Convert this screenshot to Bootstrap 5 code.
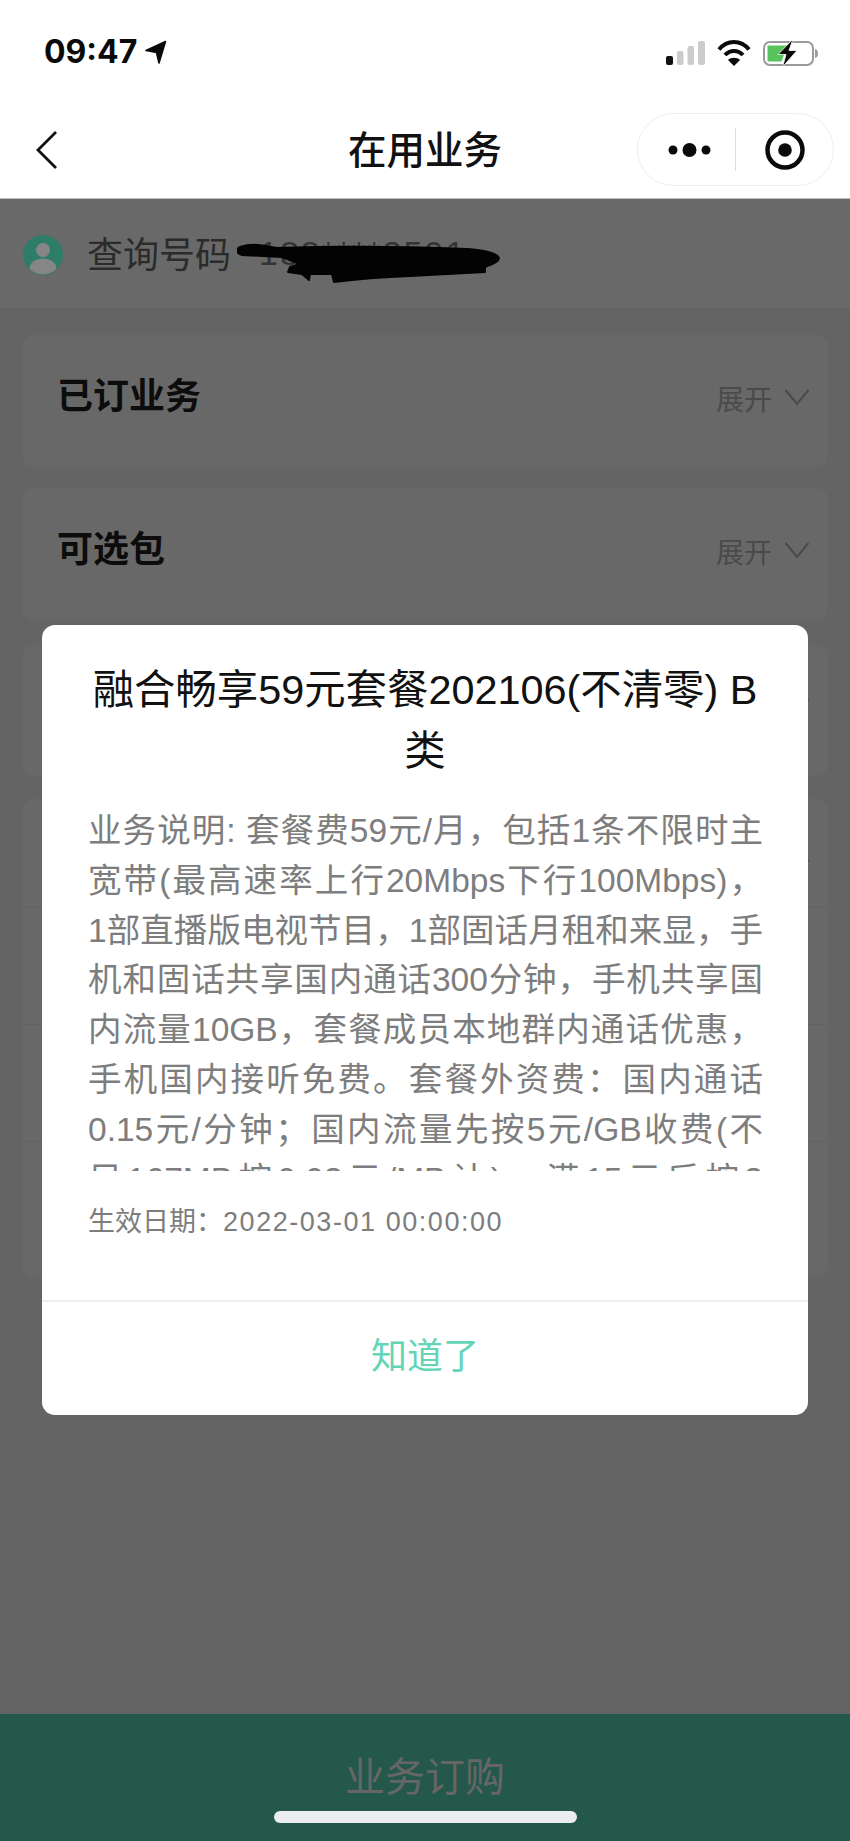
<!DOCTYPE html>
<html lang="zh"><head><meta charset="utf-8">
<link rel="stylesheet" href="https://cdn.jsdelivr.net/npm/bootstrap@5.3.0/dist/css/bootstrap.min.css">
<style>
html,body{margin:0;height:1841px;overflow:hidden;}
body{font-family:"Liberation Sans","Noto Sans CJK SC",sans-serif;background:#646464;}
.shell{width:850px;height:1841px;position:relative;}
.topbar{height:199px;background:#fff;border-bottom:1px solid #bdbdbd;}
.statusrow{height:100px;padding:39px 32px 0 44px;}
.clock{font:700 32px/26px "Inter","Liberation Sans",sans-serif;color:#0a0a0a;}
.navrow{height:99px;position:relative;padding:0 16px 0 36px;}
.navtitle{position:absolute;left:0;right:0;top:25px;text-align:center;font-size:38.5px;line-height:52px;font-weight:500;color:#111;}
.capsule{width:197px;height:73px;border:1px solid #eee;border-radius:37px;margin-top:13px;}
.capsule-left{width:97px;padding-left:6px;}
.capsule-sep{width:1px;height:43px;background:#ddd;}
.idrow{height:110px;padding:3px 0 0 23px;background:#696969;border-bottom:1px solid #626262;color:#2b2b2b;font-size:36px;position:relative;}
.idtxt{margin-left:24px;margin-top:2px;}
.scribble{position:absolute;left:237px;top:44px;}
.numtxt{color:#333;letter-spacing:2px;font-size:34px;margin-left:28px;margin-top:-3px;}
.cards{padding:26px 22px 0;}
.rowcard{background:#686868;border-radius:12px;height:132px;margin-bottom:21px;padding:0 18px 0 36px;}
.rowcard.third{height:131px;margin-bottom:23px;margin-top:25px;}
.rowcard.multi{height:478px;padding:0;margin:0;}
.subrow{padding:0 18px 0 36px;border-bottom:1px solid #616161;height:109px;}
.subrow+.subrow{height:117px;}
.subrow:last-child{height:135px;border-bottom:0;}
.rowtitle{font-size:36px;font-weight:700;color:#0c0c0c;margin-top:-9px;margin-left:-1px;}
.rowmore{font-size:28px;color:#4a4a4a;line-height:1;gap:12px;}
.chev{margin-top:-9px;}
.dialog{position:absolute;left:42px;top:625px;width:766px;height:790px;background:#fff;border-radius:13px;overflow:hidden;}
.dlgtitle{font-size:41.400px;line-height:61px;text-align:center;color:#111;padding:35px 40px 0;height:181px;}
.dlgbody{font-size:33.500px;line-height:49.800px;color:#7d7d7d;margin:0 45px 0 46px;height:365px;overflow:hidden;text-align:justify;text-align-last:justify;}
.dlgdate{font-size:27px;color:#7d7d7d;margin:31px 46px 0;line-height:40px;white-space:nowrap;}
.dlgstamp{letter-spacing:1.550px;}
.dlgfoot{position:absolute;left:0;right:0;bottom:0;height:115px;padding-bottom:3px;border-top:2px solid #eee;color:#62d5b6;font-size:36px;}
.buybar{position:absolute;left:0;right:0;bottom:0;height:127px;background:#24584b;color:#666;font-size:40px;text-align:center;padding-top:36px;line-height:54px;}
.homeind{position:absolute;left:274px;top:1811px;width:303px;height:12px;background:#ebedf0;border-radius:6px;}
</style></head><body>
<div class="shell">
 <div class="topbar">
  <div class="statusrow d-flex justify-content-between align-items-start">
   <div class="d-flex align-items-center gap-2"><span class="clock">09:47</span>
    <svg width="22" height="24" viewBox="0 0 22 24"><path d="M1 10.500 20.500 1.500 14 23l-2.500-10.500z" fill="#0a0a0a" stroke="#0a0a0a" stroke-linejoin="round" stroke-width="1.600"/></svg></div>
   <div class="d-flex align-items-center" style="gap:12px">
    <svg width="39" height="24" viewBox="0 0 39 24"><rect x="0" y="15" width="7" height="9" rx="2" fill="#111"/><rect x="11" y="10" width="6.500" height="14" rx="2" fill="#ccc"/><rect x="21.500" y="5" width="6.500" height="19" rx="2" fill="#ccc"/><rect x="32" y="0" width="7" height="24" rx="2" fill="#ccc"/></svg>
    <svg width="34" height="26" viewBox="0 0 34 26"><g fill="none" stroke="#0a0a0a" stroke-width="4"><path d="M2 9.500C10-.5 24-.5 32 9.500"/><path d="M8 15c5-5.500 13-5.500 18 0"/></g><path d="M17 26 11 20c3-3 9-3 12 0z" fill="#0a0a0a"/></svg>
    <svg width="55" height="28" viewBox="0 0 55 28"><rect x="1" y="3" width="49" height="23" rx="6" fill="none" stroke="#9a9a9a" stroke-width="2"/><path d="M4.500 6.500h20l-6 16h-14z" fill="#58c35d"/><path d="M52 10c2 .5 3 2 3 4.500s-1 4-3 4.500z" fill="#9a9a9a"/><path d="M30 0 15 15.500h8L19.500 28 34 11.500h-8z" fill="#0a0a0a" stroke="#fff" stroke-width=".8"/></svg>
   </div>
  </div>
  <div class="navrow d-flex justify-content-between align-items-start">
   <svg width="21" height="38" viewBox="0 0 21 38" class="flex-shrink-0" style="margin-top:31px"><path d="M20 1 2 19l18 18" fill="none" stroke="#111" stroke-width="2.800"/></svg>
   <div class="navtitle">在用业务</div>
   <div class="capsule d-flex align-items-center">
    <div class="capsule-left d-flex justify-content-center"><svg width="44" height="18" viewBox="0 0 44 18"><circle cx="5" cy="9" r="4.500" fill="#0a0a0a"/><circle cx="21.500" cy="9" r="7" fill="#0a0a0a"/><circle cx="38" cy="9" r="4.500" fill="#0a0a0a"/></svg></div>
    <div class="capsule-sep"></div>
    <div class="d-flex justify-content-center flex-fill"><svg width="40" height="40" viewBox="0 0 40 40"><circle cx="20" cy="20" r="17.500" fill="none" stroke="#0a0a0a" stroke-width="4.500"/><circle cx="20" cy="20" r="6.800" fill="#0a0a0a"/></svg></div>
   </div>
  </div>
 </div>
 <div class="idrow d-flex align-items-center">
  <svg width="40" height="40" viewBox="0 0 40 40"><circle cx="20" cy="20" r="20" fill="#2e7d68"/><circle cx="20" cy="15" r="7" fill="#868686"/><path d="M6.500 34c0-14 27-14 27 0a19.500 19.500 0 0 1-27 0z" fill="#868686"/></svg>
  <span class="idtxt">查询号码</span><span class="numtxt">188****3591</span>
  <svg class="scribble" width="264" height="42" viewBox="0 0 264 42"><path d="M3 4C15 0 25 2 40 5 100 3 180 4 230 6c15 1 30 4 32 9 0 4-8 7-14 9v5l-75 4c-25 1-52 3-76 6l-2-8-22 0-1 6-7-6-14-2 2-5 10-3-18-7-40-2C-1 10-1 6 3 4z" fill="#030303" stroke="#030303" stroke-linejoin="round" stroke-width="2"/></svg>
 </div>
 <div class="cards">
  <div class="rowcard d-flex justify-content-between align-items-center"><span class="rowtitle">已订业务</span><span class="rowmore d-flex align-items-center">展开<svg class="chev" width="26" height="18" viewBox="0 0 26 18"><path d="M1.500 2 13 16 24.500 2" fill="none" stroke="#4a4a4a" stroke-width="2"/></svg></span></div>
  <div class="rowcard d-flex justify-content-between align-items-center" style="margin-bottom:0"><span class="rowtitle">可选包</span><span class="rowmore d-flex align-items-center">展开<svg class="chev" width="26" height="18" viewBox="0 0 26 18"><path d="M1.500 2 13 16 24.500 2" fill="none" stroke="#4a4a4a" stroke-width="2"/></svg></span></div>
  <div class="rowcard third d-flex justify-content-end align-items-center"><svg class="chev" width="26" height="18" viewBox="0 0 26 18"><path d="M1.500 2 13 16 24.500 2" fill="none" stroke="#4a4a4a" stroke-width="2"/></svg></div>
  <div class="rowcard multi">
   <div class="subrow d-flex justify-content-end align-items-center"><svg width="26" height="18" viewBox="0 0 26 18" style="margin-top:28px"><path d="M1.500 2 13 16 24.500 2" fill="none" stroke="#4a4a4a" stroke-width="2"/></svg></div>
   <div class="subrow"></div>
   <div class="subrow"></div>
   <div class="subrow"></div>
  </div>
 </div>
 <div class="dialog">
  <div class="dlgtitle">融合畅享59元套餐202106(不清零) B类</div>
  <div class="dlgbody">业务说明: 套餐费59元/月，包括1条不限时主<br>宽带(最高速率上行20Mbps下行100Mbps)，<br>1部直播版电视节目，1部固话月租和来显，手<br>机和固话共享国内通话300分钟，手机共享国<br>内流量10GB，套餐成员本地群内通话优惠，<br>手机国内接听免费。套餐外资费：国内通话<br>0.15元/分钟；国内流量先按5元/GB收费(不<br>足167MB按0.03元/MB计)，满15元后按3</div>
  <div class="dlgdate">生效日期：<span class="dlgstamp">2022-03-01 00:00:00</span></div>
  <div class="dlgfoot d-flex align-items-center justify-content-center">知道了</div>
 </div>
 <div class="buybar">业务订购</div>
 <div class="homeind"></div>
</div>
<script src="https://cdn.jsdelivr.net/npm/bootstrap@5.3.0/dist/js/bootstrap.bundle.min.js"></script>
</body></html>
